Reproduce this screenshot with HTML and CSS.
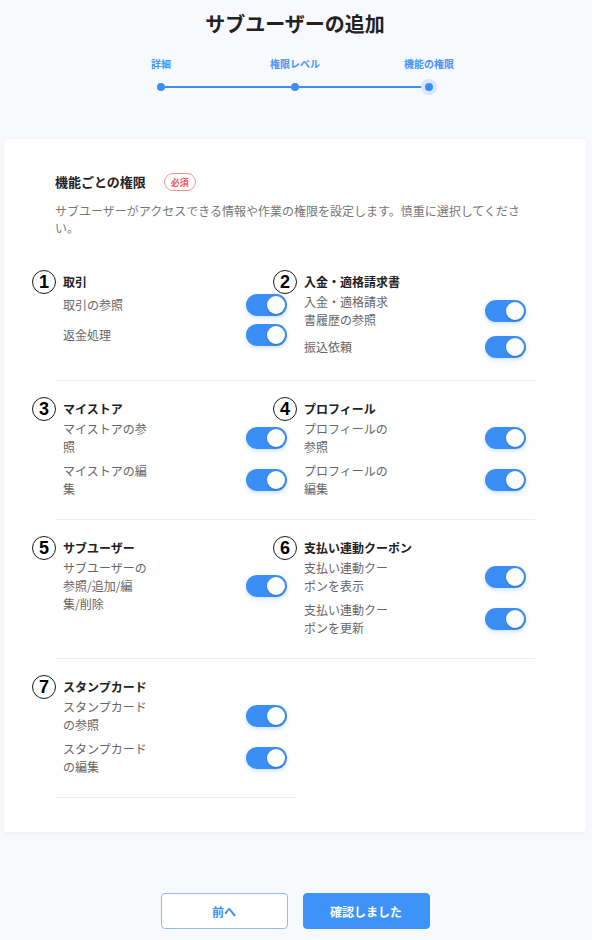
FILE: index.html
```html
<!DOCTYPE html>
<html lang="ja">

<head>
    <meta charset="UTF-8">
    <meta name="viewport" content="width=device-width, initial-scale=1.0">
    <title>サブユーザーの追加</title>

    <link rel="stylesheet" href="styles.css">
</head>

<body>

    <div class="page">
        <h1 class="page-title">サブユーザーの追加</h1>

        <div class="stepper">
            <div class="step-labels">
                <span>詳細</span>
                <span>権限レベル</span>
                <span>機能の権限</span>
            </div>
            <div class="step-track">
                <span class="dot"></span>
                <span class="track-line"></span>
                <span class="dot"></span>
                <span class="track-line"></span>
                <span class="dot current"></span>
            </div>
        </div>

        <div class="card">
            <div class="card-head">
                <h2 class="card-title">機能ごとの権限</h2>
                <span class="badge">必須</span>
            </div>
            <p class="card-desc">サブユーザーがアクセスできる情報や作業の権限を設定します。慎重に選択してください。</p>

            <div class="perms">
                <div class="perm-row">
                    <div class="perm">
                        <span class="num">1</span>
                        <h3 class="perm-title">取引</h3>
                        <div class="perm-item">
                            <span class="label">取引の参照</span>
                            <span class="toggle"><span class="knob"></span></span>
                        </div>
                        <div class="perm-item">
                            <span class="label">返金処理</span>
                            <span class="toggle"><span class="knob"></span></span>
                        </div>
                    </div>
                    <div class="perm">
                        <span class="num">2</span>
                        <h3 class="perm-title">入金・適格請求書</h3>
                        <div class="perm-item">
                            <span class="label">入金・適格請求書履歴の参照</span>
                            <span class="toggle"><span class="knob"></span></span>
                        </div>
                        <div class="perm-item">
                            <span class="label">振込依頼</span>
                            <span class="toggle"><span class="knob"></span></span>
                        </div>
                    </div>
                </div>

                <div class="perm-row">
                    <div class="perm">
                        <span class="num">3</span>
                        <h3 class="perm-title">マイストア</h3>
                        <div class="perm-item">
                            <span class="label">マイストアの参照</span>
                            <span class="toggle"><span class="knob"></span></span>
                        </div>
                        <div class="perm-item">
                            <span class="label">マイストアの編集</span>
                            <span class="toggle"><span class="knob"></span></span>
                        </div>
                    </div>
                    <div class="perm">
                        <span class="num">4</span>
                        <h3 class="perm-title">プロフィール</h3>
                        <div class="perm-item">
                            <span class="label">プロフィールの参照</span>
                            <span class="toggle"><span class="knob"></span></span>
                        </div>
                        <div class="perm-item">
                            <span class="label">プロフィールの編集</span>
                            <span class="toggle"><span class="knob"></span></span>
                        </div>
                    </div>
                </div>

                <div class="perm-row">
                    <div class="perm">
                        <span class="num">5</span>
                        <h3 class="perm-title">サブユーザー</h3>
                        <div class="perm-item">
                            <span class="label">サブユーザーの参照/追加/編集/削除</span>
                            <span class="toggle"><span class="knob"></span></span>
                        </div>
                    </div>
                    <div class="perm">
                        <span class="num">6</span>
                        <h3 class="perm-title">支払い連動クーポン</h3>
                        <div class="perm-item">
                            <span class="label">支払い連動クーポンを表示</span>
                            <span class="toggle"><span class="knob"></span></span>
                        </div>
                        <div class="perm-item">
                            <span class="label">支払い連動クーポンを更新</span>
                            <span class="toggle"><span class="knob"></span></span>
                        </div>
                    </div>
                </div>

                <div class="perm-row">
                    <div class="perm">
                        <span class="num">7</span>
                        <h3 class="perm-title">スタンプカード</h3>
                        <div class="perm-item">
                            <span class="label">スタンプカードの参照</span>
                            <span class="toggle"><span class="knob"></span></span>
                        </div>
                        <div class="perm-item">
                            <span class="label">スタンプカードの編集</span>
                            <span class="toggle"><span class="knob"></span></span>
                        </div>
                    </div>
                </div>
            </div>
        </div>

        <div class="actions">
            <button class="btn btn-outline">前へ</button>
            <button class="btn btn-primary">確認しました</button>
        </div>
    </div>

</body>

</html>
```

FILE: styles.css
```css
* {
    margin: 0;
    padding: 0;
    box-sizing: border-box;
    font-family: "Noto Sans CJK JP", "Noto Sans", sans-serif;
}

body {
    background: #f8f9fd;
    color: #222;
}

.page {
    padding: 10px 6px 0 4px;
}

.page-title {
    text-align: center;
    font-size: 20px;
    font-weight: 700;
    line-height: 28px;
    color: #222;
}

/* stepper */
.stepper {
    margin-top: 19px;
}

.step-labels {
    display: grid;
    grid-template-columns: repeat(3, 134px);
    justify-content: center;
}

.step-labels span {
    text-align: center;
    font-size: 10px;
    font-weight: 700;
    line-height: 14px;
    color: #4696f7;
}

.step-track {
    display: flex;
    align-items: center;
    width: 276px;
    margin: 12px auto 0;
}

.dot {
    width: 8px;
    height: 8px;
    border-radius: 50%;
    background: #3a8ef6;
    flex-shrink: 0;
}

.dot.current {
    box-shadow: 0 0 0 4px #d7e6fb;
}

.track-line {
    flex: 1;
    height: 2px;
    background: #3a8ef6;
}

/* card */
.card {
    margin-top: 48px;
    background: #fff;
    border-radius: 4px;
    box-shadow: 0 1px 4px rgba(30, 50, 90, 0.06);
    padding: 34px 51px;
}

.card-head {
    display: flex;
    align-items: center;
}

.card-title {
    font-size: 13px;
    font-weight: 700;
    line-height: 18px;
    color: #222;
}

.badge {
    margin-left: 18px;
    width: 32px;
    height: 18px;
    border: 1px solid #f59393;
    border-radius: 9px;
    color: #ef5a58;
    font-size: 9px;
    font-weight: 700;
    display: flex;
    align-items: center;
    justify-content: center;
}

.card-desc {
    margin-top: 11px;
    font-size: 12px;
    line-height: 17px;
    color: #777;
}

.perms {
    margin-top: 18px;
}

.perm-row {
    display: grid;
    grid-template-columns: 241px 239px;
}

.perm {
    position: relative;
    padding: 20px 9px 18px 8px;
    border-bottom: 1px solid #ebedf0;
}

.num {
    position: absolute;
    left: -23px;
    top: 16px;
    width: 24px;
    height: 24px;
    border: 1px solid #1a1a1a;
    border-radius: 50%;
    background: #fff;
    display: flex;
    align-items: center;
    justify-content: center;
    font-family: "Liberation Sans", Arial, sans-serif;
    font-size: 18px;
    font-weight: 700;
    color: #000;
}

.perm-title {
    font-size: 12px;
    font-weight: 700;
    line-height: 16px;
    color: #222;
}

.perm-item {
    display: flex;
    align-items: center;
    justify-content: space-between;
    min-height: 30px;
    padding: 3px 0;
}

.label {
    width: 85px;
    font-size: 12px;
    line-height: 18px;
    color: #666;
}

.toggle {
    width: 41px;
    height: 22px;
    border-radius: 11px;
    background: #3a8ef6;
    display: flex;
    align-items: center;
    justify-content: flex-end;
    padding: 0 2px;
    box-shadow: 0 2px 4px rgba(58, 142, 246, 0.25);
}

.knob {
    width: 18px;
    height: 18px;
    border-radius: 50%;
    background: #fff;
    box-shadow: 0 1px 2px rgba(0, 0, 0, 0.2);
}

/* buttons */
.actions {
    display: flex;
    justify-content: center;
    gap: 15px;
    margin-top: 61px;
}

.btn {
    width: 127px;
    height: 36px;
    border-radius: 4px;
    font-size: 12px;
    font-weight: 700;
    cursor: pointer;
}

.btn-outline {
    background: #fff;
    border: 1px solid #8fbcf6;
    color: #3a8ef6;
}

.btn-primary {
    background: #3d93f8;
    border: 1px solid #3d93f8;
    color: #fff;
}
```
